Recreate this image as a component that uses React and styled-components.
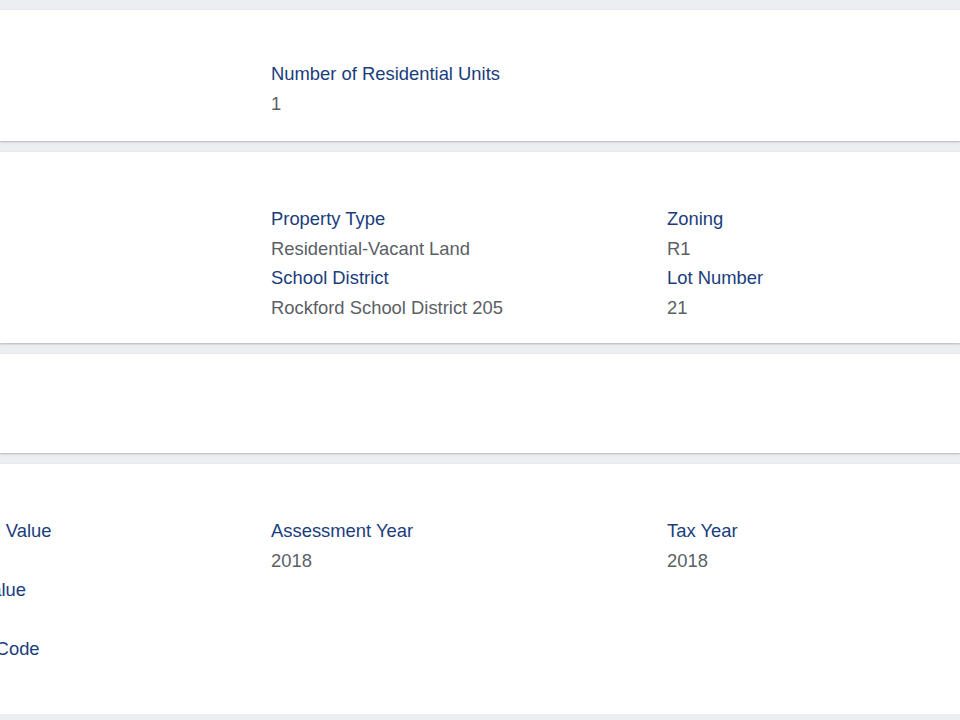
import React from "react";
import styled, { createGlobalStyle } from "styled-components";

const GlobalStyle = createGlobalStyle`
  html, body {
    margin: 0;
    padding: 0;
    background-color: #eceef1;
    font-family: "Liberation Sans", Arial, Helvetica, sans-serif;
  }
`;

// Styled Components
const Page = styled.div`
  display: flex;
  flex-direction: column;
  gap: 11px;
  padding-top: 10px;
  width: 960px;
  overflow: hidden;
`;

const Card = styled.section`
  background-color: #ffffff;
  box-shadow: 0 1px 2px rgba(0, 0, 0, 0.24), 0 0 1px rgba(0, 0, 0, 0.06);
  overflow: hidden;
  padding: ${(p) => p.$padTop ?? 52}px 0 ${(p) => p.$padBottom ?? 21}px;
  min-height: ${(p) => p.$minHeight ?? 0}px;
  box-sizing: border-box;
`;

// the first column sits partly outside the left edge of the view
const FieldGrid = styled.div`
  display: grid;
  grid-template-columns: repeat(3, 396px);
  margin-left: -125px;
`;

const Column = styled.div`
  display: flex;
  flex-direction: column;
`;

const Label = styled.div`
  font-size: 18.4px;
  line-height: 29.5px;
  color: #1a3d7c;
  white-space: nowrap;
`;

const Value = styled.div`
  font-size: 18.4px;
  line-height: 29.5px;
  min-height: 29.5px;
  color: #5b5f66;
  white-space: nowrap;
`;

const sections = [
  {
    padTop: 49,
    padBottom: 23,
    columns: [[], [{ label: "Number of Residential Units", value: "1" }], []],
  },
  {
    columns: [
      [],
      [
        { label: "Property Type", value: "Residential-Vacant Land" },
        { label: "School District", value: "Rockford School District 205" },
      ],
      [
        { label: "Zoning", value: "R1" },
        { label: "Lot Number", value: "21" },
      ],
    ],
  },
  { minHeight: 99, columns: [] },
  {
    columns: [
      [
        { label: "Assessed Land Value", value: "" },
        { label: "Total Market Value", value: "" },
        { label: "Tax Rate Area Code", value: "" },
      ],
      [{ label: "Assessment Year", value: "2018" }],
      [{ label: "Tax Year", value: "2018" }],
    ],
  },
];

function App() {
  return (
    <>
      <GlobalStyle />
      <Page>
        {sections.map((section, i) => (
          <Card
            key={i}
            $padTop={section.minHeight ? 0 : section.padTop}
            $padBottom={section.minHeight ? 0 : section.padBottom}
            $minHeight={section.minHeight}
          >
            {section.columns.length > 0 && (
              <FieldGrid>
                {section.columns.map((fields, c) => (
                  <Column key={c}>
                    {fields.map((field) => (
                      <React.Fragment key={field.label}>
                        <Label>{field.label}</Label>
                        <Value>{field.value}</Value>
                      </React.Fragment>
                    ))}
                  </Column>
                ))}
              </FieldGrid>
            )}
          </Card>
        ))}
      </Page>
    </>
  );
}

export default App;
